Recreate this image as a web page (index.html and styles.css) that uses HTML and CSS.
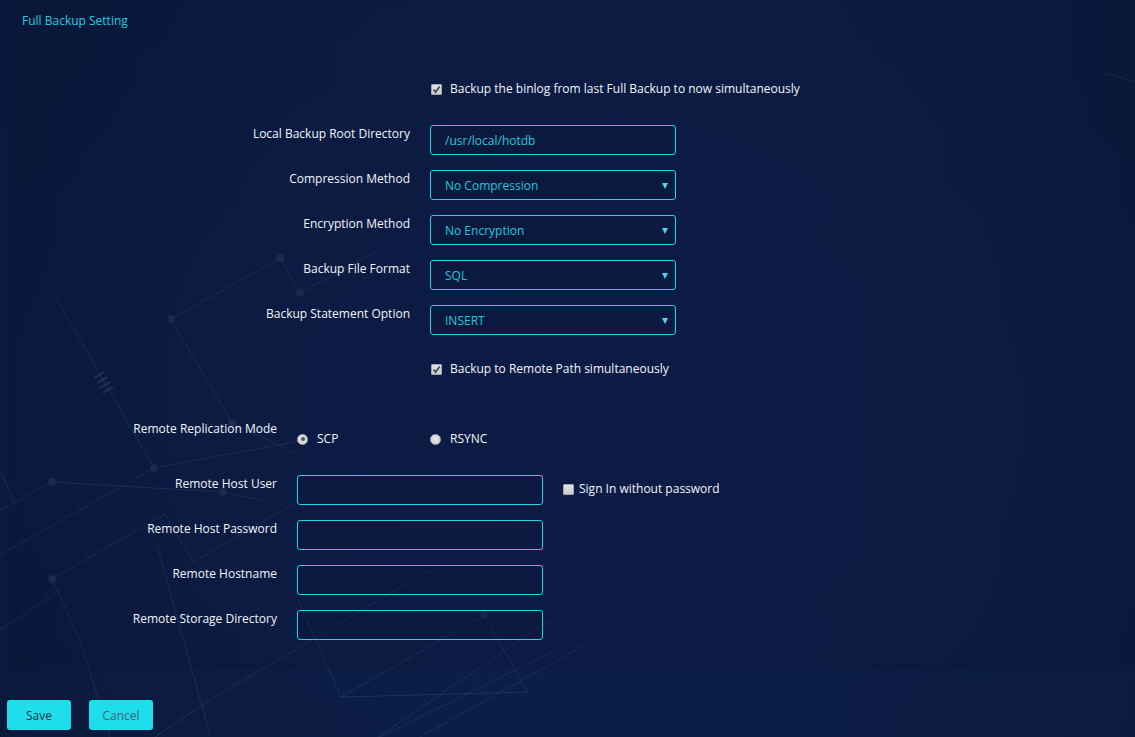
FILE: index.html
```html
<!DOCTYPE html>
<html lang="en">
<head>
<meta charset="utf-8">
<title>Full Backup Setting</title>
<link rel="stylesheet" href="styles.css">
</head>
<body>
<svg class="deco" width="1135" height="737" viewBox="0 0 1135 737" aria-hidden="true">
  <g class="lines">
    <polyline points="53,293 154,468"/>
    <polyline points="171,319 280,258 300,293 380,250"/>
    <polyline points="171,319 232,423 300,455"/>
    <polyline points="0,555 154,468 305,440"/>
    <polyline points="0,510 52,482 223,492 260,500"/>
    <polyline points="0,470 15,503"/>
    <polyline points="52,579 165,514 193,562 300,500"/>
    <polyline points="52,579 80,640 110,737"/>
    <polyline points="157,545 210,735"/>
    <polyline points="298,600 341,697 484,615 528,692 341,697"/>
    <polyline points="155,737 210,700 430,570"/>
    <polyline points="380,737 555,650"/>
    <polyline points="420,737 585,645"/>
    <polyline points="0,630 60,590"/>
    <polyline points="1105,73 1135,82"/>
    <polyline points="550,620 300,790"/>
  </g>
  <g class="ticks">
    <line x1="94" y1="378" x2="104" y2="372"/>
    <line x1="97" y1="383" x2="107" y2="377"/>
    <line x1="100" y1="388" x2="110" y2="382"/>
    <line x1="103" y1="393" x2="113" y2="387"/>
  </g>
  <g class="dots">
    <circle cx="280" cy="258" r="4"/>
    <circle cx="300" cy="293" r="4"/>
    <circle cx="171" cy="319" r="4"/>
    <circle cx="232" cy="423" r="4"/>
    <circle cx="154" cy="468" r="4"/>
    <circle cx="52" cy="482" r="4"/>
    <circle cx="223" cy="492" r="4"/>
    <circle cx="52" cy="579" r="4"/>
    <circle cx="484" cy="615" r="4"/>
  </g>
</svg>

<div class="page">
  <div class="panel">
    <h1 class="title">Full Backup Setting</h1>

    <div class="section main">
      <div class="row check-row">
        <span></span>
        <label class="check">
          <span class="box checked"><svg width="11" height="11" viewBox="0 0 11 11"><path d="M2.5 5.5 L4.5 8 L8.8 2.5" /></svg></span>
          Backup the binlog from last Full Backup to now simultaneously
        </label>
      </div>

      <div class="fields">
        <div class="row">
          <span class="label">Local Backup Root Directory</span>
          <div class="input"><span class="value">/usr/local/hotdb</span></div>
        </div>
        <div class="row">
          <span class="label">Compression Method</span>
          <div class="input select"><span class="value">No Compression</span><span class="arrow"></span></div>
        </div>
        <div class="row">
          <span class="label">Encryption Method</span>
          <div class="input select"><span class="value">No Encryption</span><span class="arrow"></span></div>
        </div>
        <div class="row">
          <span class="label">Backup File Format</span>
          <div class="input select"><span class="value">SQL</span><span class="arrow"></span></div>
        </div>
        <div class="row">
          <span class="label">Backup Statement Option</span>
          <div class="input select"><span class="value">INSERT</span><span class="arrow"></span></div>
        </div>
      </div>

      <div class="row check-row second">
        <span></span>
        <label class="check">
          <span class="box checked"><svg width="11" height="11" viewBox="0 0 11 11"><path d="M2.5 5.5 L4.5 8 L8.8 2.5" /></svg></span>
          Backup to Remote Path simultaneously
        </label>
      </div>
    </div>

    <div class="section remote">
      <div class="row radio-row">
        <span class="label">Remote Replication Mode</span>
        <div class="radios">
          <label class="radio"><span class="dot on"></span>SCP</label>
          <label class="radio"><span class="dot"></span>RSYNC</label>
        </div>
      </div>
      <div class="fields">
        <div class="row">
          <span class="label">Remote Host User</span>
          <div class="input"></div>
          <label class="check side">
            <span class="box"></span>
            Sign In without password
          </label>
        </div>
        <div class="row">
          <span class="label">Remote Host Password</span>
          <div class="input"></div>
        </div>
        <div class="row">
          <span class="label">Remote Hostname</span>
          <div class="input"></div>
        </div>
        <div class="row">
          <span class="label">Remote Storage Directory</span>
          <div class="input"></div>
        </div>
      </div>
    </div>
  </div>

  <div class="actions">
    <button class="btn save" type="button">Save</button>
    <button class="btn cancel" type="button">Cancel</button>
  </div>
</div>
</body>
</html>
```

FILE: styles.css
```css
* { box-sizing: border-box; }

html, body {
  margin: 0;
  padding: 0;
  width: 1135px;
  height: 737px;
  overflow: hidden;
}

body {
  font-family: "Open Sans", "Noto Sans", "Liberation Sans", sans-serif;
  font-size: 12px;
  line-height: 16px;
  color: #f2f5fa;
  background:
    radial-gradient(ellipse 700px 520px at 560px 420px, #0d1f4a 0%, rgba(13,31,74,0) 100%),
    linear-gradient(90deg, #0a193b 0%, #0c1c43 40%, #0c1c44 70%, #0b1a3d 100%);
  position: relative;
}

.deco {
  position: absolute;
  left: 0;
  top: 0;
  pointer-events: none;
}
.deco .lines polyline {
  fill: none;
  stroke: rgba(120, 140, 185, 0.17);
  stroke-width: 1;
}
.deco .ticks line {
  stroke: rgba(120, 140, 185, 0.25);
  stroke-width: 1.5;
}
.deco .dots circle {
  fill: rgba(45, 60, 100, 0.5);
}

.page {
  position: relative;
}

.title {
  margin: 0 0 0 -7px;
  padding: 13px 0 0 22px;
  font-size: 12px;
  line-height: 16px;
  font-weight: 400;
  color: #1fcde0;
  height: 41px;
}

.panel {
  margin-left: 7px;
  padding: 0 0 30px;
  background: rgba(5, 12, 35, 0.1);
}

.main {
  padding-top: 39px;
}

.row {
  display: grid;
  align-items: start;
}

.main .row {
  grid-template-columns: 403px 246px;
  column-gap: 20px;
}

.remote .row {
  grid-template-columns: 270px 246px auto;
  column-gap: 20px;
}

.fields {
  display: flex;
  flex-direction: column;
  row-gap: 15px;
}

.main .fields {
  margin-top: 28px;
}

.check-row.second {
  margin-top: 25px;
}

.label {
  text-align: right;
  white-space: nowrap;
  color: #f2f5fa;
  padding-top: 1px;
}

.input {
  position: relative;
  height: 30px;
  border: 1px solid #1bd4e6;
  border-radius: 3px;
  padding: 0 14px;
  display: flex;
  align-items: center;
  color: #1ec8db;
  background: rgba(8, 18, 45, 0.2);
}

.input .value {
  line-height: 16px;
  padding-top: 1px;
}

.select .arrow {
  position: absolute;
  right: 7px;
  top: 12px;
  width: 0;
  height: 0;
  border-left: 3px solid transparent;
  border-right: 3px solid transparent;
  border-top: 6px solid #4ed6ee;
}

.check {
  display: flex;
  align-items: center;
  gap: 8px;
  white-space: nowrap;
  padding-left: 1px;
  color: #f2f5fa;
}

.check-row .check {
  padding-top: 1px;
}

.box {
  width: 11px;
  height: 11px;
  border: 1px solid #a3a6ac;
  border-radius: 1px;
  background: linear-gradient(#e2e2e2, #c9cbce);
  display: inline-flex;
  flex: none;
}
.box svg {
  display: block;
  margin: -1px;
}
.box svg path {
  fill: none;
  stroke: #4b4f56;
  stroke-width: 1.8;
}

.check.side {
  padding-top: 6px;
  gap: 5px;
  padding-left: 0;
}

.remote {
  margin-top: 43px;
}

.radio-row {
  height: 40px;
  margin-bottom: 15px;
}

.radios {
  display: flex;
  padding-top: 11px;
}

.radio {
  display: flex;
  align-items: center;
  gap: 9px;
  width: 133px;
  flex: none;
}

.dot {
  width: 11px;
  height: 11px;
  border-radius: 50%;
  background: radial-gradient(circle at 50% 45%, #e8e8e8 0%, #c9cbce 100%);
  border: 1px solid #b0b3b8;
  position: relative;
  flex: none;
}
.dot.on::after {
  content: "";
  position: absolute;
  left: 2.5px;
  top: 2.5px;
  width: 4px;
  height: 4px;
  border-radius: 50%;
  background: #55595f;
}

.actions {
  display: flex;
  gap: 18px;
  margin: 30px 0 0 7px;
}

.btn {
  width: 64px;
  height: 30px;
  border: none;
  border-radius: 3px;
  background: #1ddfec;
  font-family: "Open Sans", "Noto Sans", "Liberation Sans", sans-serif;
  font-size: 12px;
  line-height: 16px;
  padding: 2px 0 0;
  cursor: pointer;
}
.btn.save { color: #1f3040; }
.btn.cancel { color: #4d6070; }
```
